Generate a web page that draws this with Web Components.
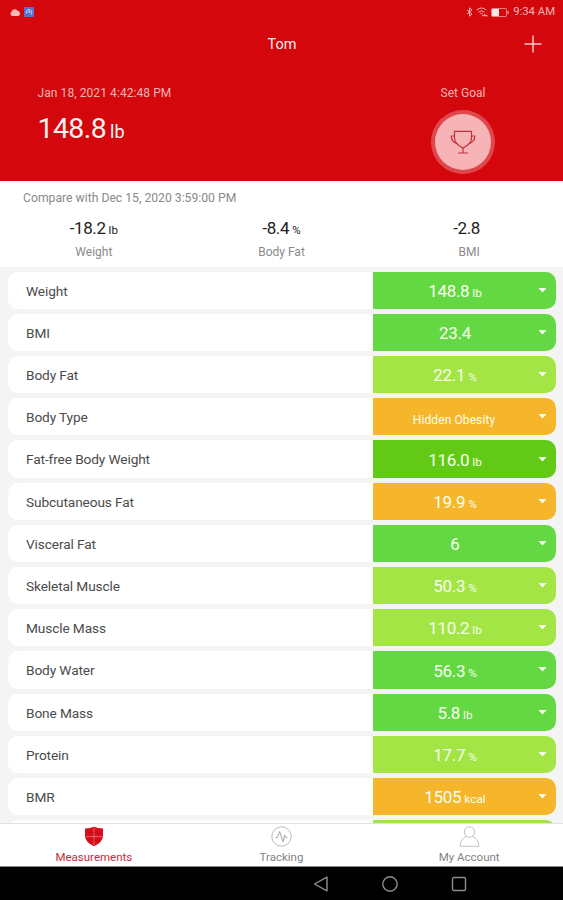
<!DOCTYPE html>
<html lang="en">
<head>
<meta charset="utf-8">
<title>Measurements</title>
<style>
  html, body {
    height: 100%;
    margin: 0;
  }

  body {
    background: #f4f4f4;
    font-family: Roboto, 'Liberation Sans', sans-serif;
    overflow: hidden;
  }
</style>
</head>
<body>
<scale-app></scale-app>

<script>
class StatusBar extends HTMLElement {
  constructor() {
    super();

    const template = document.createElement( 'template' );
    template.innerHTML = /* template */ `
      <style>
        :host {
          align-items: center;
          box-sizing: border-box;
          color: #f7b6b6;
          display: flex;
          font-size: 11.3px;
          height: 24px;
          line-height: 24px;
          padding: 0 8px 0 9px;
        }

        svg {
          display: block;
        }

        .fill {
          flex-grow: 1;
        }

        .cloud { margin-right: 3px; }
        .bluetooth { margin-right: 3px; }
        .wifi { margin-right: 3px; }
        .battery { margin-right: 4px; }
      </style>
      <svg class="cloud" width="12" height="10" viewBox="0 0 12 10">
        <path d="M3 9 A2.3 2.3 0 0 1 2.6 4.8 A3.3 3.3 0 0 1 8.7 3.8 A2.7 2.7 0 0 1 9.3 9 Z" fill="#f8b9b4"/>
      </svg>
      <svg width="10" height="10" viewBox="0 0 10 10">
        <rect width="10" height="10" rx="1" fill="#5672cf"/>
        <path d="M2.5 6.5 V4 L5 2.2 L7.7 4.2 V7.5 M4 4.8 L6 4.3 L5 6" fill="none" stroke="#c7d4f8"/>
      </svg>
      <span class="fill"></span>
      <svg class="bluetooth" width="7" height="10" viewBox="0 0 7 10">
        <path d="M1 3 L6 7 L3.5 9.2 V.8 L6 3 L1 7" fill="none" stroke="currentColor"/>
      </svg>
      <svg class="wifi" width="12" height="10" viewBox="0 0 12 10">
        <path d="M.7 3 Q5.5 -.9 10.3 3 M2.5 5 Q5.5 2.7 8.4 5 M4.2 6.9 Q5.5 5.9 6.8 6.9 M6 8.7 H11.5 M8 7 L11 9.3" fill="none" stroke="currentColor"/>
      </svg>
      <svg class="battery" width="18" height="9" viewBox="0 0 18 9">
        <rect x=".5" y=".5" width="15" height="8" rx="1" fill="none" stroke="currentColor" stroke-opacity=".7"/>
        <rect x="1" y="1" width="7" height="7" fill="#ffe4e4"/>
        <path d="M17 3 V6" stroke="currentColor"/>
      </svg>
      <slot></slot>
    `;

    this.attachShadow( {mode: 'open'} );
    this.shadowRoot.appendChild( template.content.cloneNode( true ) );
  }
}

window.customElements.define( 'scale-status-bar', StatusBar );

class TitleBar extends HTMLElement {
  constructor() {
    super();

    const template = document.createElement( 'template' );
    template.innerHTML = /* template */ `
      <style>
        :host {
          align-items: center;
          box-sizing: border-box;
          color: #fff0f0;
          display: grid;
          font-size: 14.5px;
          grid-template-columns: 1fr auto 1fr;
          height: 40px;
          padding: 1px 21px 0 22px;
        }

        span {
          grid-column: 2;
        }

        svg {
          display: block;
          justify-self: end;
          margin-bottom: 1px;
        }
      </style>
      <span><slot></slot></span>
      <svg width="18" height="18" viewBox="0 0 18 18">
        <path d="M9 .5 V17.5 M.5 9 H17.5" stroke="#fbc9c9" stroke-width="1.5"/>
      </svg>
    `;

    this.attachShadow( {mode: 'open'} );
    this.shadowRoot.appendChild( template.content.cloneNode( true ) );
  }
}

window.customElements.define( 'scale-title-bar', TitleBar );

class Summary extends HTMLElement {
  constructor() {
    super();

    const template = document.createElement( 'template' );
    template.innerHTML = /* template */ `
      <style>
        :host {
          box-sizing: border-box;
          color: #f7b5b5;
          display: flex;
          font-size: 12px;
          height: 117px;
          justify-content: space-between;
          line-height: 16px;
          padding: 21px 68px 0 37.5px;
        }

        .date {
          letter-spacing: 0.08px;
        }

        .value {
          color: #fff3f3;
          font-size: 28.5px;
          letter-spacing: -0.6px;
          line-height: 34px;
          margin-top: 11px;
        }

        .unit {
          font-size: 18px;
          letter-spacing: 0;
          margin-left: 4px;
        }

        .goal {
          align-items: center;
          display: flex;
          flex-direction: column;
        }

        .goal svg {
          display: block;
          margin-top: 9px;
        }
      </style>
      <div>
        <div class="date"><slot name="date"></slot></div>
        <div class="value"><slot name="value"></slot><span class="unit"><slot name="unit"></slot></span></div>
      </div>
      <div class="goal">
        <slot name="goal"></slot>
        <svg width="64" height="64" viewBox="0 0 64 64">
          <circle cx="32" cy="32" r="32" fill="#e0474d"/>
          <circle cx="32" cy="32" r="28" fill="#f6b4b7"/>
          <g fill="none" stroke="#c3303a" stroke-width="1.2">
            <path d="M23.5 21.3 H40.5 V28 C40.5 33.5 36 35.5 32 38 C28 35.5 23.5 33.5 23.5 28 Z"/>
            <path d="M23.5 26 H20.3 C20 30.5 22.5 32.5 26.5 33.8 M40.5 26 H43.7 C44 30.5 41.5 32.5 37.5 33.8"/>
            <path d="M32 38 V43 M27 43 H37"/>
          </g>
        </svg>
      </div>
    `;

    this.attachShadow( {mode: 'open'} );
    this.shadowRoot.appendChild( template.content.cloneNode( true ) );
  }
}

window.customElements.define( 'scale-summary', Summary );

class Compare extends HTMLElement {
  constructor() {
    super();

    const template = document.createElement( 'template' );
    template.innerHTML = /* template */ `
      <style>
        :host {
          background: #ffffff;
          box-sizing: border-box;
          color: #8a8a8a;
          display: block;
          font-size: 12.2px;
          height: 86px;
          line-height: 16px;
          padding-top: 9px;
        }

        .when {
          padding-left: 23px;
        }

        .items {
          display: grid;
          grid-template-columns: repeat( 3, 1fr );
          margin-top: 12px;
        }
      </style>
      <div class="when"><slot name="when"></slot></div>
      <div class="items"><slot></slot></div>
    `;

    this.attachShadow( {mode: 'open'} );
    this.shadowRoot.appendChild( template.content.cloneNode( true ) );
  }
}

window.customElements.define( 'scale-compare', Compare );

class Delta extends HTMLElement {
  constructor() {
    super();

    const template = document.createElement( 'template' );
    template.innerHTML = /* template */ `
      <style>
        :host {
          display: block;
          font-size: 12px;
          text-align: center;
        }

        .value {
          color: #222222;
          font-size: 17px;
          height: 20px;
          letter-spacing: -0.4px;
          line-height: 20px;
        }

        .unit {
          font-size: 11.5px;
          letter-spacing: 0;
          line-height: 1;
          margin-left: 3px;
        }

        .unit:empty {
          margin-left: 5px;
        }

        .label {
          margin-top: 6px;
        }
      </style>
      <div class="value"><span class="number"></span><span class="unit"></span></div>
      <div class="label"><slot></slot></div>
    `;

    this.attachShadow( {mode: 'open'} );
    this.shadowRoot.appendChild( template.content.cloneNode( true ) );

    this.$number = this.shadowRoot.querySelector( '.number' );
    this.$unit = this.shadowRoot.querySelector( '.unit' );
  }

  connectedCallback() {
    this.$number.textContent = this.getAttribute( 'value' );
    this.$unit.textContent = this.getAttribute( 'unit' );
  }
}

window.customElements.define( 'scale-delta', Delta );

class Measure extends HTMLElement {
  constructor() {
    super();

    const template = document.createElement( 'template' );
    template.innerHTML = /* template */ `
      <style>
        :host {
          background: #ffffff;
          border-radius: 10px;
          color: #4b4b4b;
          display: flex;
          flex-shrink: 0;
          font-size: 13.7px;
          height: 37.2px;
          letter-spacing: -0.12px;
          line-height: 37.2px;
          overflow: hidden;
        }

        :host( [level=good] ) .value { background: #63d843; }
        :host( [level=fair] ) .value { background: #a2e545; }
        :host( [level=warn] ) .value { background: #f6b62b; }
        :host( [level=best] ) .value { background: #62ca17; }

        .label {
          flex-grow: 1;
          padding-left: 18px;
          padding-top: 1px;
        }

        .value {
          align-items: center;
          box-sizing: border-box;
          color: #f8ffee;
          display: flex;
          padding-right: 9px;
          width: 183px;
        }

        .text {
          flex-grow: 1;
          font-size: 17px;
          height: 37.2px;
          letter-spacing: -0.3px;
          padding-right: 1px;
          padding-top: 2.5px;
          text-align: center;
        }

        :host( [small] ) .text {
          font-size: 12px;
          letter-spacing: 0.1px;
          padding-right: 3px;
          padding-top: 7px;
        }

        .unit {
          font-size: 11.8px;
          letter-spacing: 0;
          line-height: 1;
          margin-left: 3px;
        }

        .unit:empty {
          display: none;
        }

        svg {
          display: block;
          margin-bottom: 1px;
        }
      </style>
      <div class="label"><slot></slot></div>
      <div class="value">
        <div class="text"><span class="number"></span><span class="unit"></span></div>
        <svg width="9" height="6" viewBox="0 0 9 6">
          <path d="M.5 1 H8.5 L4.5 5.5 Z" fill="#f8ffee"/>
        </svg>
      </div>
    `;

    this.attachShadow( {mode: 'open'} );
    this.shadowRoot.appendChild( template.content.cloneNode( true ) );

    this.$number = this.shadowRoot.querySelector( '.number' );
    this.$unit = this.shadowRoot.querySelector( '.unit' );
  }

  connectedCallback() {
    this.$number.textContent = this.getAttribute( 'value' );
    this.$unit.textContent = this.getAttribute( 'unit' );
  }
}

window.customElements.define( 'scale-measure', Measure );

class Tab extends HTMLElement {
  constructor() {
    super();

    const template = document.createElement( 'template' );
    template.innerHTML = /* template */ `
      <style>
        :host {
          align-items: center;
          color: #828282;
          display: flex;
          flex: 1 1 0;
          flex-direction: column;
          font-size: 11.5px;
          line-height: 14px;
          padding-top: 2px;
        }

        :host( [selected] ) {
          color: #d0283a;
        }

        ::slotted( svg ) {
          display: block;
          margin-bottom: 3px;
        }
      </style>
      <slot name="icon"></slot>
      <span><slot></slot></span>
    `;

    this.attachShadow( {mode: 'open'} );
    this.shadowRoot.appendChild( template.content.cloneNode( true ) );
  }
}

window.customElements.define( 'scale-tab', Tab );

class SystemNav extends HTMLElement {
  constructor() {
    super();

    const template = document.createElement( 'template' );
    template.innerHTML = /* template */ `
      <style>
        :host {
          align-items: center;
          background: #000000;
          box-sizing: border-box;
          display: flex;
          gap: 53px;
          height: 33px;
          justify-content: flex-end;
          padding-right: 96px;
        }

        svg {
          display: block;
          fill: none;
          stroke: #8d8d8d;
          stroke-width: 1.4;
        }
      </style>
      <svg width="16" height="16" viewBox="0 0 16 16"><path d="M1.5 8 L14 1.2 V14.8 Z" stroke-linejoin="round"/></svg>
      <svg width="16" height="16" viewBox="0 0 16 16"><circle cx="8" cy="8" r="7.2"/></svg>
      <svg width="16" height="16" viewBox="0 0 16 16"><rect x="1.5" y="1.5" width="13" height="13" rx="1.5"/></svg>
    `;

    this.attachShadow( {mode: 'open'} );
    this.shadowRoot.appendChild( template.content.cloneNode( true ) );
  }
}

window.customElements.define( 'scale-system-nav', SystemNav );

class App extends HTMLElement {
  constructor() {
    super();

    const template = document.createElement( 'template' );
    template.innerHTML = /* template */ `
      <style>
        :host {
          display: flex;
          flex-direction: column;
          height: 900px;
          width: 563px;
        }

        header {
          background: #d4070d;
          flex-shrink: 0;
        }

        main {
          box-sizing: border-box;
          display: flex;
          flex: 1 1 0;
          flex-direction: column;
          gap: 5px;
          min-height: 0;
          overflow: hidden;
          padding: 4.7px 7px 0 8px;
        }

        nav {
          background: #ffffff;
          border-bottom: 1px solid #8a8a8a;
          border-top: 1.5px solid #e2e2e2;
          box-sizing: border-box;
          display: flex;
          flex-shrink: 0;
          height: 44px;
        }
      </style>
      <header>
        <scale-status-bar>9:34 AM</scale-status-bar>
        <scale-title-bar>Tom</scale-title-bar>
        <scale-summary>
          <span slot="date">Jan 18, 2021 4:42:48 PM</span>
          <span slot="value">148.8</span>
          <span slot="unit">lb</span>
          <span slot="goal">Set Goal</span>
        </scale-summary>
      </header>
      <scale-compare>
        <span slot="when">Compare with Dec 15, 2020 3:59:00 PM</span>
        <scale-delta value="-18.2" unit="lb">Weight</scale-delta>
        <scale-delta value="-8.4" unit="%">Body Fat</scale-delta>
        <scale-delta value="-2.8">BMI</scale-delta>
      </scale-compare>
      <main>
        <scale-measure level="good" value="148.8" unit="lb">Weight</scale-measure>
        <scale-measure level="good" value="23.4">BMI</scale-measure>
        <scale-measure level="fair" value="22.1" unit="%">Body Fat</scale-measure>
        <scale-measure level="warn" value="Hidden Obesity" small>Body Type</scale-measure>
        <scale-measure level="best" value="116.0" unit="lb">Fat-free Body Weight</scale-measure>
        <scale-measure level="warn" value="19.9" unit="%">Subcutaneous Fat</scale-measure>
        <scale-measure level="good" value="6">Visceral Fat</scale-measure>
        <scale-measure level="fair" value="50.3" unit="%">Skeletal Muscle</scale-measure>
        <scale-measure level="fair" value="110.2" unit="lb">Muscle Mass</scale-measure>
        <scale-measure level="good" value="56.3" unit="%">Body Water</scale-measure>
        <scale-measure level="good" value="5.8" unit="lb">Bone Mass</scale-measure>
        <scale-measure level="fair" value="17.7" unit="%">Protein</scale-measure>
        <scale-measure level="warn" value="1505" unit="kcal">BMR</scale-measure>
        <scale-measure level="fair"></scale-measure>
      </main>
      <nav>
        <scale-tab selected>
          <svg slot="icon" width="20" height="21" viewBox="0 0 20 21">
            <path d="M10 .7 Q14 2.6 19 2.5 V10 Q18.5 16.5 10 20.3 Q1.5 16.5 1 10 V2.5 Q6 2.6 10 .7 Z" fill="#d80f1c"/>
            <path d="M10 2 V19 M2 10.5 H18" stroke="#ee6a70" stroke-width=".9"/>
            <path d="M5.5 4 V16 M14.5 4 V16 M3 6.5 H17 M4 14 H16" stroke="#b5101a" stroke-width=".7" opacity=".6"/>
          </svg>
          Measurements
        </scale-tab>
        <scale-tab>
          <svg slot="icon" width="21" height="21" viewBox="0 0 21 21" fill="none" stroke="#bababa">
            <circle cx="10.5" cy="10.5" r="9.7"/>
            <path d="M4.5 11.5 H6.5 L8.7 5.5 L12 15.8 L13.7 9 L14.8 11.5 H16.5" stroke="#a5a5a5"/>
          </svg>
          Tracking
        </scale-tab>
        <scale-tab>
          <svg slot="icon" width="21" height="21" viewBox="0 0 21 21" fill="none" stroke="#c2c2c2">
            <circle cx="10.5" cy="6" r="5.2"/>
            <path d="M7.3 10.4 C3.5 12 1.3 15.5 1 20.3 H20 C19.7 15.5 17.5 12 13.7 10.4"/>
          </svg>
          My Account
        </scale-tab>
      </nav>
      <scale-system-nav></scale-system-nav>
    `;

    this.attachShadow( {mode: 'open'} );
    this.shadowRoot.appendChild( template.content.cloneNode( true ) );
  }
}

window.customElements.define( 'scale-app', App );
</script>
</body>
</html>
